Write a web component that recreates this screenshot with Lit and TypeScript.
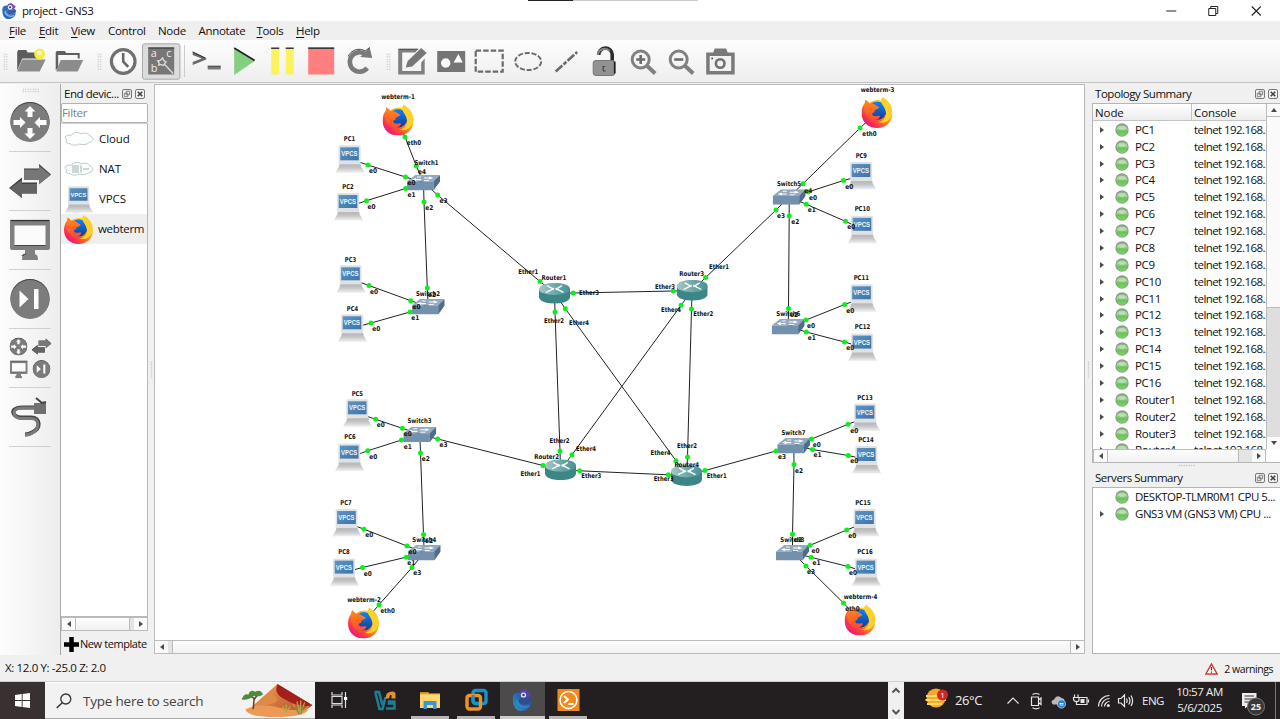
import { LitElement, html, svg, css } from "lit";
import { customElement } from "lit/decorators.js";

type Pt = [number, number];
type Kind = "pc" | "switch" | "router" | "web";
interface Device { name: string; kind: Kind; x: number; y: number; lx: number; ly: number; }
interface End { id: string; dot: Pt; label: string; at: Pt; }

// x / y is the top-left corner of the symbol, lx / ly the middle of the caption.
const d = (name: string, kind: Kind, x: number, y: number, lx: number, ly: number): Device => ({ name, kind, x, y, lx, ly });
const devices: Device[] = [
  d("webterm-1", "web", 382.5, 104.5, 398, 97), d("webterm-2", "web", 348, 607.5, 364, 599.5),
  d("webterm-3", "web", 861.5, 97, 877.5, 89.5), d("webterm-4", "web", 844.5, 604.5, 860.5, 597),
  d("PC1", "pc", 335, 145, 349.5, 139), d("PC2", "pc", 333.5, 192.7, 348, 187),
  d("PC3", "pc", 336, 265, 350.5, 260), d("PC4", "pc", 337.5, 314, 352.5, 308.5),
  d("PC5", "pc", 342.7, 399, 357.3, 393.7), d("PC6", "pc", 334.7, 443.3, 350, 436.8),
  d("PC7", "pc", 332, 508.7, 346, 502.5), d("PC8", "pc", 329.5, 558.3, 344, 552),
  d("PC9", "pc", 846.5, 161.7, 861.3, 156), d("PC10", "pc", 847.5, 215.5, 862.3, 209.3),
  d("PC11", "pc", 847, 284, 861.3, 277.8), d("PC12", "pc", 847.5, 333.3, 862.5, 327.3),
  d("PC13", "pc", 850.5, 403.3, 865, 397.7), d("PC14", "pc", 851.7, 445.7, 866, 439.7),
  d("PC15", "pc", 850, 508.7, 863, 502.5), d("PC16", "pc", 851.3, 558.3, 865, 552),
  d("Switch1", "switch", 407, 175, 426.5, 162.7), d("Switch2", "switch", 411.7, 299, 428, 293.7),
  d("Switch3", "switch", 403.3, 426.7, 419.5, 421), d("Switch4", "switch", 407.7, 545, 424.3, 540),
  d("Switch5", "switch", 772.7, 189.3, 789, 184.3), d("Switch6", "switch", 771.7, 319, 788.3, 314.3),
  d("Switch7", "switch", 777.3, 438, 793.5, 433.2), d("Switch8", "switch", 776, 545, 792.3, 540),
  d("Router1", "router", 539, 282.7, 554, 277.7), d("Router2", "router", 545, 459.3, 546.7, 456.7),
  d("Router3", "router", 676.7, 279.8, 691.7, 273.9), d("Router4", "router", 671, 465, 686.8, 465),
];
const centre: Record<Kind, Pt> = { pc: [15, 14], switch: [16.5, 7.5], router: [15.5, 10.5], web: [15.5, 15.5] };

const e = (id: string, dx: number, dy: number, label: string, lx: number, ly: number): End => ({ id, dot: [dx, dy], label, at: [lx, ly] });
const links: [End, End][] = [
  [e("webterm-1", 405, 137, "eth0", 414, 142.5), e("Switch1", 416.3, 166, "e4", 422, 172)],
  [e("PC1", 368, 165, "e0", 373, 171), e("Switch1", 405.5, 177, "e0", 411.5, 183)],
  [e("PC2", 366.5, 200.7, "e0", 371.5, 206.7), e("Switch1", 405.5, 188.5, "e1", 411.5, 194.5)],
  [e("Switch1", 424, 202, "e2", 429.3, 207.7), e("Switch2", 427.3, 288, "e2", 432, 295)],
  [e("Switch1", 437.7, 195, "e3", 443.5, 201), e("Router1", 540, 281.5, "Ether1", 528.3, 272)],
  [e("PC3", 369, 285.5, "e0", 374, 291.8), e("Switch2", 410.7, 300.7, "e0", 416.5, 306.8)],
  [e("PC4", 371, 323, "e0", 376.3, 328.5), e("Switch2", 410, 312, "e1", 415.3, 318)],
  [e("PC5", 375.7, 419.3, "e0", 380.7, 425), e("Switch3", 402.3, 428.3, "e0", 407.7, 434)],
  [e("PC6", 367.7, 450.8, "e0", 373.2, 456.7), e("Switch3", 401.5, 440, "e1", 407.7, 446.5)],
  [e("Switch3", 420.5, 453, "e2", 425.7, 458.7), e("Switch4", 423.5, 534.5, "e2", 429, 540.5)],
  [e("Switch3", 437.7, 439, "e3", 443.5, 444.5), e("Router2", 543, 465.5, "Ether1", 530.5, 473.5)],
  [e("PC7", 364, 529.2, "e0", 369.3, 535.3), e("Switch4", 407, 546, "e0", 412.5, 552)],
  [e("PC8", 362.5, 567.5, "e0", 367.7, 573.5), e("Switch4", 406.3, 557.2, "e1", 411.3, 563.3)],
  [e("webterm-2", 379, 604.7, "eth0", 387.7, 610.8), e("Switch4", 412, 567.5, "e3", 417.3, 572.8)],
  [e("Router1", 573.3, 293, "Ether3", 589, 292.8), e("Router3", 673.3, 291, "Ether3", 665, 287)],
  [e("Router1", 555, 312, "Ether2", 554, 320.8), e("Router2", 560, 451, "Ether2", 559.5, 440.7)],
  [e("Router1", 565.3, 308.7, "Ether4", 579, 322.7), e("Router4", 676, 460.7, "Ether4", 660.5, 453)],
  [e("Router3", 681, 305.3, "Ether4", 671, 309.7), e("Router2", 572, 454.7, "Ether4", 586, 449)],
  [e("Router3", 691.5, 309, "Ether2", 703.3, 314.3), e("Router4", 687.5, 457, "Ether2", 687, 445.5)],
  [e("Router3", 705.7, 277.5, "Ether1", 719, 266.7), e("Switch5", 776, 210, "e3", 781, 216)],
  [e("Router2", 579.7, 470.8, "Ether3", 591.3, 476.3), e("Router4", 668.3, 474.8, "Ether3", 663.7, 479)],
  [e("Router4", 705, 470.5, "Ether1", 716.7, 476.3), e("Switch7", 776, 451, "e3", 782, 456.7)],
  [e("Switch5", 803, 183.7, "e4", 808.3, 190.7), e("webterm-3", 860, 128, "eth0", 869.5, 133.8)],
  [e("Switch5", 808, 192, "e0", 813, 197.5), e("PC9", 843.5, 180.5, "e0", 849.3, 187)],
  [e("Switch5", 806.3, 204.3, "e1", 811.7, 210.3), e("PC10", 845.5, 221.3, "e0", 851.3, 227.3)],
  [e("Switch5", 789.2, 216, "e2", 795.3, 221.8), e("Switch6", 788.5, 308.5, "e2", 794, 314.8)],
  [e("Switch6", 806, 320, "e0", 811, 326.3), e("PC11", 844.7, 304.5, "e0", 850.3, 310.7)],
  [e("Switch6", 806.3, 332, "e1", 811.7, 337.8), e("PC12", 844.5, 342, "e0", 850.3, 348)],
  [e("Switch7", 811.5, 439, "e0", 816.8, 444.5), e("PC13", 848, 424.3, "e0", 854.2, 430.5)],
  [e("Switch7", 812.5, 449.5, "e1", 817.5, 454.5), e("PC14", 848.3, 455.5, "e0", 854.2, 461.3)],
  [e("Switch7", 794, 464.5, "e2", 799, 470.8), e("Switch8", 792.5, 534.3, "e2", 798, 540.3)],
  [e("Switch8", 810, 545.3, "e0", 815.5, 551), e("PC15", 846.7, 530, "e0", 852.3, 535.5)],
  [e("Switch8", 811, 557.3, "e1", 816.5, 563), e("PC16", 848, 566.5, "e0", 853, 572.8)],
  [e("Switch8", 806, 566, "e3", 811, 571.8), e("webterm-4", 843.5, 603, "eth0", 852.5, 609)],
];
const byName = new Map(devices.map((n) => [n.name, n]));
const mid = (id: string): Pt => {
  const n = byName.get(id)!;
  const c = centre[n.kind];
  return [n.x + c[0], n.y + c[1]];
};
const captionWidth = (t: string): number =>
  t.startsWith("webterm") ? 33.7 : t.startsWith("Router") ? 24.8 : t.startsWith("Switch") ? 24 :
  t.startsWith("Ether") ? 20 : t === "eth0" ? 14.3 : t.startsWith("PC") ? (t.length > 3 ? 15.3 : 11.3) : 8;
const caption = (t: string, x: number, y: number) =>
  svg`<text class="cap" x=${x - captionWidth(t) / 2} y=${y + 2.1} textLength=${captionWidth(t)} lengthAdjust="spacingAndGlyphs">${t}</text>`;

const G = "#808080";
const defs = svg`
  <defs>
    <linearGradient id="base" x2="0" y2="1"><stop offset="0" stop-color="#b4b4b4"/><stop offset=".45" stop-color="#c6c6c6"/><stop offset="1" stop-color="#f4f4f4"/></linearGradient>
    <linearGradient id="screen" x2="1" y2="1"><stop offset="0" stop-color="#5f95c4"/><stop offset="1" stop-color="#3b74a9"/></linearGradient>
    <linearGradient id="rtop" x2="1"><stop offset="0" stop-color="#a9c9c9"/><stop offset=".55" stop-color="#6ba6a6"/><stop offset="1" stop-color="#4a9292"/></linearGradient>
    <linearGradient id="fox" x1=".85" y1=".1" x2=".15" y2=".9"><stop offset="0" stop-color="#fff44f"/><stop offset=".3" stop-color="#ffbb1c"/><stop offset=".55" stop-color="#ff7a1a"/><stop offset=".8" stop-color="#ff3647"/><stop offset="1" stop-color="#e31587"/></linearGradient>
    <linearGradient id="foxl" x2="0" y2="1"><stop offset="0" stop-color="#ff8a1e"/><stop offset=".5" stop-color="#ff6a22"/><stop offset="1" stop-color="#ff4a3a"/></linearGradient>
    <linearGradient id="foxb" x2="0" y2="1"><stop offset="0" stop-color="#0a84ff"/><stop offset="1" stop-color="#15398f"/></linearGradient>
    <linearGradient id="dune" x2="1" y2="1"><stop offset="0" stop-color="#e7a05a"/><stop offset="1" stop-color="#b9481f"/></linearGradient>
    <linearGradient id="led" x2="0" y2="1"><stop offset="0" stop-color="#7fae75"/><stop offset=".35" stop-color="#a6d79c"/><stop offset=".6" stop-color="#6cc05c"/><stop offset="1" stop-color="#74dc5c"/></linearGradient>
    <linearGradient id="cham" x1="1" x2="0" y2="1"><stop offset="0" stop-color="#7a2fa5"/><stop offset=".5" stop-color="#2c62b5"/><stop offset="1" stop-color="#26a3b8"/></linearGradient>
    <symbol id="pc" viewBox="0 0 30 28">
      <path d="M5.500 19H24.500L30 28H0Z" fill="url(#base)"/>
      <path d="M5 18.500H25L26.500 21H3.500Z" fill="#b9bcbf"/>
      <rect x="3.600" y=".3" width="22" height="19" rx="1.500" fill="#dfe1e3"/>
      <rect x="5.200" y="2.300" width="18.600" height="13" fill="url(#screen)"/>
      <text x="6.300" y="11.400" class="vp" textLength="16.200" lengthAdjust="spacingAndGlyphs">VPCS</text>
    </symbol>
    <symbol id="switch" viewBox="0 0 33 15.500">
      <path d="M0 6.600L8.300 0H33L27 6.600Z" fill="#93a9c0"/>
      <path d="M0 6.600H26.500V15.500H1Q0 15.500 0 14.500Z" fill="#7390ad"/>
      <path d="M26.500 6.600L33 0V6.500L26.500 15.500Z" fill="#4f6c8c"/>
      <path d="M17 2.500H22V1.500L26.500 3L22 4.500V3.500H17ZM14 5.300H9V6.300L5 4.600L9 3.100V4.100H14Z" fill="#fff"/>
      <path d="M10 2H14M17 5.500H22" stroke="#fff" stroke-width=".9"/>
    </symbol>
    <symbol id="router" viewBox="0 0 31 21">
      <path d="M0 6V14.500C1 23 30 23 31 14.500V6Z" fill="#3b8686"/>
      <ellipse cx="15.500" cy="6.200" rx="15.500" ry="6.200" fill="url(#rtop)"/>
      <path d="M8 3L14 6.200L7 9.600M23 3L17.500 6.200L24.500 9.600" fill="none" stroke="#f4fafa" stroke-width="1.500"/>
      <path d="M11 6.500L15 4.800L14.500 7.500ZM20.500 6.500L16.500 4.800L17 7.500Z" fill="#f4fafa"/>
    </symbol>
    <symbol id="web" viewBox="0 0 31 31">
      <path d="M4 2.500L8 6C11 3.500 16 2.500 19 3.500L21 .3C28 4 31 10 31 16C31 25 24 31 15.500 31S0 25 0 16C0 12 1.500 8 3.500 6Z" fill="url(#fox)"/>
      <circle cx="15.800" cy="13.800" r="9.200" fill="url(#foxb)"/>
      <path d="M4 3L8.500 7C11 6.500 13 6.800 14 8L18 10.300C17 12 14.500 12.300 13 13.500L13 15.500C11 15 10.300 16.500 11 18C13 20.300 16 18 18.500 19C18 22.300 14 24.300 9.500 22.800C5 20 2 15 2.800 8Z" fill="url(#foxl)"/>
      <path d="M21 .3C29 5 31 11 30.700 17C28 25 22 27 17 25C23 24 26 19 24 14C23.500 10 20 8 20 4.500C20 3 20.500 1.500 21 .3Z" fill="#ffd02a"/>
    </symbol>
    <symbol id="float" viewBox="0 0 10 10"><rect x=".5" y=".5" width="9" height="9" rx="1.500" fill="#f3f3f3" stroke="#777"/><path d="M4.200 2.300H7.700V5.800H4.200ZM2.300 4.200H5.800V7.700H2.300Z" fill="#f3f3f3" stroke="#666" stroke-width=".8"/></symbol>
    <symbol id="shut" viewBox="0 0 10 10"><rect x=".5" y=".5" width="9" height="9" rx="1.500" fill="#f3f3f3" stroke="#777"/><path d="M2.700 2.700L7.300 7.300M7.300 2.700L2.700 7.300" stroke="#444" stroke-width="1.600"/></symbol>
    <symbol id="arrows4" viewBox="-20 -20 40 40">
      <circle r="19.600" cy="-.3" fill="#3c3c3c"/><circle r="19.400" cy=".5" fill="#7c7c7c"/>
      <path d="M0-16L5.500-10.500H2.500V-5H-2.500V-10.500H-5.500Z" fill="#fff"/>
      <path d="M0 17L5.500 11.500H2.500V6H-2.500V11.500H-5.500Z" fill="#fff"/>
      <path d="M-4.500 .5L-10-5V-2H-16.500V3H-10V6Z" fill="#fff"/>
      <path d="M4.500 .5L10-5V-2H16.500V3H10V6Z" fill="#fff"/>
    </symbol>
    <symbol id="swap" viewBox="-21 -17 42 34">
      <path d="M-6-12.500H9V-17L21-6.500L9 3V-1H-6Z" fill="#3f3f3f"/><path d="M-6-11.500H9V-15.500L20.500-5.800L9 3.500V-1H-6Z" fill="#777"/>
      <path d="M7 1.500H-8V-3.500L-21 7L-8 17V12.500H7Z" fill="#404040"/><path d="M7 3H-8V-1.500L-20 7.500L-8 17V12.500H7Z" fill="#646464"/>
    </symbol>
    <symbol id="screenic" viewBox="-20.500 -20.500 41 41">
      <path d="M-18.500-20H18.500Q20-20 20-18V8Q20 10 18 10H5V14Q8 14.500 8 20H-8Q-8 14.500-5 14V10H-18Q-20 10-20 8V-18Q-20-20-18.500-20Z" fill="${G}"/>
      <path d="M-19.500-19.500H19.500" stroke="#333" stroke-width="1.500"/><rect x="-15.500" y="-14.500" width="31" height="20" fill="#fbfbfb"/><path d="M-15.500 5.500H15.500M-8 16Q-6 14-4 14" stroke="#444" stroke-width="1.200" fill="none"/>
    </symbol>
    <symbol id="step" viewBox="-20 -20 40 40">
      <circle r="19.600" cy="-.3" fill="#3c3c3c"/><circle r="19.400" cy=".5" fill="#7c7c7c"/>
      <path d="M-10.500-8.500L-1.500 0L-10.500 8.500ZM4-10H8.500V10H4Z" fill="#fff"/>
    </symbol>
  </defs>`;

const use = (id: string, w: number, h: number, x = 0, y = 0) =>
  svg`<use href="#${id}" x=${x} y=${y} width=${w} height=${h}></use>`;
const icon = (cls: string, box: string, body: unknown) => html`<svg class=${cls} viewBox=${box}>${body}</svg>`;

const fileTools = [
  svg`<path d="M-14-9.500L-13-11.500H-5L-3.500-9H8V-3H-9L-14 9Z" fill="#5c5c5c"/><path d="M-9-2H14.500L8.500 10H-14Z" fill="#8c8c8c"/><circle cx="8.500" cy="-7.500" r="5.500" fill="#f5ec4a"/><circle cx="8" cy="-8.500" r="2.500" fill="#fdf9b0"/>`,
  svg`<path d="M-13.500-9L-12.500-10.500H-4.500L-3-8.500H10.500V-3H8.500V-6.500H-11V6L-13.500 9Z" fill="#5f5f5f"/><path d="M-8.500-1.500H14L8.500 10H-13Z" fill="#8c8c8c"/>`,
];
const viewTools = [
  svg`<circle r="11.800" fill="#fbfbfb" stroke="#707070" stroke-width="3.200"/><path d="M0-8.500V0L5 5.500" fill="none" stroke="#666" stroke-width="2.600"/>`,
  svg`<rect x="-18.700" y="-17.700" width="37.400" height="35.400" rx="2" fill="#dcdcdc" stroke="#aaa"/><rect x="-13" y="-14" width="26" height="27" fill="#777"/><path d="M-13-13.500H13" stroke="#333"/>
    <text class="abc" x="-10.500" y="-4.500">a</text><text class="abc" x="5" y="-4.500">c</text><text class="abc" x="-10.500" y="10.500">b</text>
    <path d="M-3.500-.5L-1-1L1.500-3.500L2.500-1L5 .5L3.500 2L2 4L-.5 3L-2.500 3.500L-2 1.500ZM3 2.500L12 12" fill="none" stroke="#dcdcdc" stroke-width="1.300"/>`,
];
const runTools = [
  svg`<path d="M-13.500-10L0-3.500V-2L-13.500 3.500V.5L-4.500-3L-13.500-6.500Z" fill="#6a6a6a"/><path d="M-13.500-9.500L-1-3.500" stroke="#333" fill="none"/><rect x="1.500" y="4.500" width="13" height="3.500" fill="#777"/><path d="M1.500 4.700H14.500" stroke="#444"/>`,
  svg`<path d="M-10-14L10.500-.5L-10 13.500Z" fill="#85cf80"/><path d="M-10-13.500L10.500-1" stroke="#222" stroke-width="1.600"/>`,
  svg`<path d="M-11-14H-3V13H-11ZM3.500-14H11.500V13H3.500Z" fill="#fbf35b"/><path d="M-11-13.300H-3M3.500-13.300H11.500" stroke="#3a3a3a" stroke-width="1.600"/>`,
  svg`<rect x="-13" y="-14" width="26" height="27" fill="#ff7f7f"/><path d="M-13-13.300H13" stroke="#3a3a3a" stroke-width="1.600"/>`,
  svg`<path d="M8 6.500A9.700 9.700 0 1 1 6.500-7" fill="none" stroke="#7a7a7a" stroke-width="4.600"/><path d="M10.500-14L13-3.500L1-4.500Z" fill="#7a7a7a"/><path d="M-11-5A11.800 11.800 0 0 1 6-10.500L10.500-14" fill="none" stroke="#444"/>`,
];
const drawTools = [
  svg`<path d="M-14-12.500H6L3-9H-10V9.500H9V1L12.500-3V13H-14Z" fill="${G}"/><path d="M-13.500-12.300H6" stroke="#444"/><path d="M-6.500 6L-4.500-.5L9-13.500L14.500-8.500L0 5Z" fill="#777"/>`,
  svg`<rect x="-14" y="-10.500" width="28" height="21" fill="#757575"/><circle cx="-5.500" cy="1.500" r="4.700" fill="#fff"/><path d="M2.500 1L7.200-7.500L11.500 1Z" fill="#fff"/>`,
  svg`<rect x="-13.500" y="-10.800" width="27" height="21" fill="none" stroke="#6b6b6b" stroke-width="2.200" stroke-dasharray="5.500 2"/>`,
  svg`<ellipse rx="13" ry="8.600" fill="none" stroke="#6b6b6b" stroke-width="2" stroke-dasharray="5 1.800"/>`,
  svg`<path d="M-10.500 10L11-9.500" stroke="#6b6b6b" stroke-width="2.600" stroke-dasharray="9 1.500 4 1.500"/>`,
  svg`<path d="M-5.500-6.500A6.200 6.200 0 0 1 8-7V0" fill="none" stroke="#2d2d2d" stroke-width="3.600"/><path d="M-6.500-6.500A7 7 0 0 1 5.500-10.500" fill="none" stroke="#888" stroke-width="2"/><rect x="-11" y="-1" width="21.500" height="15" rx="2.500" fill="#929292" stroke="#767676"/><path d="M10.500 0V12" stroke="#222" stroke-width="1.800"/><path d="M-1 4.500V9.500M-1 5H1M-1 9.500H1.500" stroke="#444" stroke-width="1.200"/>`,
  svg`<circle cx="-2.500" cy="-2" r="8.500" fill="#f4f4f4" stroke="${G}" stroke-width="3"/><path d="M4 4.500L12 12" stroke="${G}" stroke-width="4"/><path d="M-7-2H2M-2.500-6.500V2.500" stroke="#6b6b6b" stroke-width="2.600"/>`,
  svg`<circle cx="-2.500" cy="-2" r="8.500" fill="#f4f4f4" stroke="${G}" stroke-width="3"/><path d="M4 4.500L12 12" stroke="${G}" stroke-width="4"/><path d="M-7-2H2" stroke="#6b6b6b" stroke-width="2.600"/>`,
  svg`<path d="M-14-9H-7L-5.500-13H6L7.500-9H14.500V13H-14Z" fill="#7a7a7a"/><rect x="-10.500" y="-5.500" width="21.500" height="15" fill="#f2f2f2"/><circle cy="2" r="4.300" fill="none" stroke="#707070" stroke-width="2.600"/><circle cx="-8" cy="-3" r="1" fill="#555"/>`,
];
const sideTools = [
  use("arrows4", 40, 41, -20, -20.5),
  use("swap", 42, 34, -21, -17),
  use("screenic", 41, 41, -20.5, -20.5),
  use("step", 40, 41, -20, -20.5),
  [use("arrows4", 18, 18, -20.5, -20.5), use("swap", 20, 17, 1.5, -20), use("screenic", 18.5, 18, -20.5, 2.5), use("step", 18, 18, 2.5, 2)],
  svg`<path d="M4-11H-8C-21-11-18-1-9-1H1C11-1 11 10 2 14Q-1 16-5 16" fill="none" stroke="#444" stroke-width="4" transform="translate(0 1.500)"/><path d="M4-10H-8C-20-10-17 .5-9 .5H1C10 .5 10 11 2 15Q-1 17-5 17" fill="none" stroke="#7b7b7b" stroke-width="3" transform="translate(0 1)"/><path d="M4-14H16V-3H4Z" fill="#707070"/><path d="M6-19L12-14L16-15" stroke="#444" stroke-width="2" fill="none"/>`,
];
const cloud = svg`<path d="M3 8C-1 5 3 2 7 3.500C9 0 15-.5 17 2C20 .5 25 1 26 4C30 5 30 10 25 10.500C22 13.500 17 12.500 15 12C12 14 7 13 6 11.500C2 12 1 9.500 3 8Z" fill="#fdfefe" stroke="#a9bdbb" stroke-width=".8"/>`;
const palette = [
  { name: "Cloud", w: 30, h: 14, art: cloud },
  { name: "NAT", w: 30, h: 14, art: [cloud, svg`<path d="M8 4h7M8 6h7M8 8h7M8 10h7M17 3.500v7M19 7h6" stroke="#8fa9a6" stroke-width=".9"/>`] },
  { name: "VPCS", w: 30, h: 27, art: use("pc", 30, 27) },
  { name: "webterm", w: 29, h: 29, art: use("web", 29, 29) },
];
const menus = ["File", "Edit", "View", "Control", "Node", "Annotate", "Tools", "Help"];
const plain = new Set(["Control", "Node", "Annotate"]);
const menuX = [9, 39, 71, 108, 158, 198.5, 256.5, 296, 330];
const nodeRows = [...Array.from({ length: 16 }, (_, i) => `PC${i + 1}`), "Router1", "Router2", "Router3", "Router4"];
const led = icon("led", "0 0 14 14", svg`<circle cx="7" cy="7" r="6.700" fill="#8f9a8d"/><circle cx="7" cy="7.200" r="5.600" fill="url(#led)"/><ellipse cx="7" cy="4.700" rx="3.600" ry="2" fill="#c4e6bd" opacity=".7"/>`);
const tri = (pts: string) => icon("tri", "0 0 8 8", svg`<path d=${pts} fill="#4a4a4a"/>`);
const LEFT = "M6 1V7L2 4Z", RIGHT = "M2 1V7L6 4Z", UP = "M1 6H7L4 2Z", DOWN = "M1 2H7L4 6Z";

@customElement("app-root")
export class AppRoot extends LitElement {
  static styles = css`
    :host { display: flex; flex-direction: column; width: 1280px; height: 719px; overflow: hidden; background: #f0f0f0; font: 11.500px/16px "Open Sans", "Noto Sans", sans-serif; letter-spacing: -0.32px; color: #111; }
    * { box-sizing: border-box; }
    svg { display: block; flex: none; }
    .title { height: 21px; background: #fff; display: flex; align-items: center; padding: 0 3px 0 2px; position: relative; flex: none; letter-spacing: -.42px; }
    .title .name { flex: 1; padding-left: 6px; }
    .notch { position: absolute; left: 528px; top: 0; width: 170px; height: 1px; background: linear-gradient(90deg, #222 45px, #ccc 45px); }
    .logo { width: 14px; height: 16px; }
    .win { width: 42.500px; height: 20px; }
    .menu { height: 19px; display: grid; padding-left: 9px; align-items: center; background: #efefef; flex: none; }
    .menu u { text-underline-offset: 2px; text-decoration-thickness: 1px; }
    .tools { height: 43px; display: flex; align-items: center; flex: none; background: linear-gradient(#fdfdfd, #eee); border-bottom: 1px solid #c3c3c3; }
    .tb { width: 38.400px; height: 38px; overflow: visible; }
    .grip { width: 5px; height: 17px; background-image: radial-gradient(circle, #c2c2c2 .6px, transparent .9px); background-size: 2.500px 2.500px; flex: none; }
    .g1 { margin: 0 3.400px 0 3.400px; } .g2 { margin: 0 2px 0 8px; } .g3 { margin: 0 2.300px 0 7.500px; }
    .vsep { width: 1px; height: 32px; background: #ccc; margin: 0 2px 0 3.300px; }
    .work { flex: 1; min-height: 0; display: flex; padding-top: 1px; }
    .side { width: 61px; flex: none; border-right: 1px solid #a9a9a9; background: linear-gradient(90deg, #fdfdfd, #ededed); display: flex; flex-direction: column; align-items: center; }
    .hgrip { width: 17px; height: 5px; margin: 4px 0 0; background-image: radial-gradient(circle, #bbb .6px, transparent .9px); background-size: 2.500px 2.500px; flex: none; }
    .sb { width: 60px; height: 59px; border-bottom: 1px solid transparent; border-image: linear-gradient(90deg, transparent 16%, #d0d0d0 16%, #d0d0d0 84%, transparent 84%) 1; }
    .dock { width: 87px; flex: none; display: flex; flex-direction: column; }
    .dt { height: 19px; display: flex; align-items: center; padding: 0 3px 0 3px; gap: 3px; flex: none; letter-spacing: -.45px; }
    .dt span { flex: 1; white-space: nowrap; }
    .db { width: 10px; height: 10px; }
    .filter { height: 20px; border: 1px solid #b2b2b2; border-radius: 2px; background: #fff; color: #808080; line-height: 18px; flex: none; }
    .list { flex: 1; background: #fff; border: 1px solid #b8b8b8; border-left: 0; border-top-color: #d0d0d0; }
    .item { height: 30px; display: flex; align-items: center; gap: 5px; padding-left: 3px; letter-spacing: -.1px; }
    .item.sel { background: #efefef; letter-spacing: -.3px; }
    .hs { height: 14px; display: flex; border: 1px solid #bbb; background: #e4e4e4; flex: none; }
    .ab { width: 13px; background: #fafafa; display: flex; align-items: center; justify-content: center; flex: none; }
    .tri { width: 8px; height: 8px; }
    .thumb { background: linear-gradient(#fdfdfd, #f1f1f1); border: 0 solid #bbb; border-width: 0 1px; }
    .canvas .thumb { margin-left: 4px; }
    .canvas .hs { border-left: 0; border-right: 0; }
    .new { height: 23px; display: flex; align-items: center; padding-left: 3px; gap: 1px; white-space: nowrap; font-size: 11px; flex: none; margin-bottom: 1px; padding-top: 3px; letter-spacing: -.42px; }
    .plus { width: 15px; height: 15px; }
    .split { width: 6px; display: flex; align-items: center; justify-content: center; flex: none; }
    .split.wide { width: 7px; }
    .split .grip { width: 3px; }
    .canvas { width: 931px; display: flex; flex-direction: column; border: 1px solid #bbb; border-width: 1px 1px 0 1px; background: #fff; flex: none; margin-bottom: 1px; }
    .topo { flex: 1; min-height: 0; width: 929px; }
    .cap { font: bold 6.600px "DejaVu Sans", sans-serif; fill: #111; letter-spacing: 0; }
    .vp { font: bold 6.500px "Liberation Sans", sans-serif; fill: #eef5fb; letter-spacing: 0; }
    .abc { font: 11px "Open Sans", sans-serif; fill: #ececec; letter-spacing: 0; }
    .right { width: 188px; display: flex; flex-direction: column; flex: none; }
    .right .dt { padding-right: 2px; gap: 3px; }
    .table { height: 360px; display: grid; grid-template-columns: 173px 14px; grid-template-rows: 345px 14px; border: 1px solid #b5b5b5; border-right: 0; background: #fff; flex: none; overflow: hidden; }
    .rows { overflow: hidden; }
    .head { height: 17.400px; display: grid; grid-template-columns: 98px 1fr; line-height: 17px; background: linear-gradient(#fff, #ececec); border-bottom: 1px solid #c4c4c4; letter-spacing: -.1px; }
    .head span { padding-left: 2px; } .head span + span { border-left: 1px solid #c4c4c4; }
    .row { height: 16.880px; display: grid; grid-template-columns: 22px 20px 59px 80px; align-items: center; white-space: nowrap; line-height: 16px; overflow: hidden; }
    .row span + span { letter-spacing: -.57px; }
    .row .tri { margin-left: 5px; }
    .led { width: 14px; height: 14px; }
    .vs { display: flex; flex-direction: column; border-left: 1px solid #bbb; background: #dedede; }
    .vs .ab { width: 13px; height: 12px; }
    .vs .thumb { height: 192px; border-width: 1px 0; background: #fafafa; }
    .fill { flex: 1; }
    .mid { height: 5px; display: flex; justify-content: center; flex: none; }
    .mid .hgrip { margin: 1px 0 0; height: 3px; }
    .servers { flex: 1; background: #fff; border: 1px solid #b5b5b5; border-right: 0; padding-top: 1px; margin-bottom: 1px; }
    .servers .row { grid-template-columns: 22px 20px 144px; letter-spacing: -.47px; }
    .status { height: 27px; display: flex; align-items: center; justify-content: space-between; padding: 0 7px 0 5px; border-bottom: 1px solid #cfcfcf; flex: none; letter-spacing: -.36px; }
    .warn { display: flex; align-items: center; gap: 6px; font-size: 10.500px; letter-spacing: -.45px; padding-top: 2px; }
    .wi { width: 13px; height: 12px; }
    .task { height: 37px; display: flex; background: #231f20; color: #eee; flex: none; letter-spacing: -.2px; }
    .start { width: 45px; background: #393031; display: flex; align-items: center; justify-content: center; }
    .search { width: 270px; background: #f2f2f2; color: #444; display: flex; align-items: center; padding-left: 11px; font-size: 13.500px; border-top: 1px solid #fff; border-bottom: 1px solid #aaa; }
    .search span { flex: 1; padding-left: 11px; }
    .app { width: 38px; border-bottom: 3px solid transparent; display: flex; align-items: center; justify-content: center; margin: 0 4px; padding-top: 2px; }
    .app.open { border-color: #b9b5b5; }
    .app.cur { width: 45px; margin: 0 .5px; background: #4d4a4b; border-color: #cfcccc; }
    .i26 { width: 26px; height: 26px; }
    .spin { width: 16px; background: #f0f0f0; }
    .temp { font-size: 13px; width: 54px; padding-left: 7px; line-height: 37px; letter-spacing: -.4px; }
    .tray { width: 137px; height: 37px; }
    .lang { line-height: 37px; width: 29px; padding-left: 3px; letter-spacing: -.5px; }
    .clock { width: 67px; text-align: center; line-height: 16.500px; padding: 1.500px 4px 0 0; letter-spacing: -.4px; }
    .note { width: 40px; height: 37px; }
    .n25 { font: bold 9px "Open Sans", sans-serif; fill: #eee; letter-spacing: 0; }
    .n1 { font: 8px "Open Sans", sans-serif; fill: #fff; letter-spacing: 0; }
  `;

  private topology() {
    return html`<svg class="topo" viewBox="155 85 929 555">
      ${defs}
      <g stroke="#222" stroke-width="1">
        ${links.map(([a, b]) => {
          const p = mid(a.id), q = mid(b.id);
          return svg`<path d="M${p[0]} ${p[1]}L${a.dot[0]} ${a.dot[1]}L${b.dot[0]} ${b.dot[1]}L${q[0]} ${q[1]}" fill="none"/>`;
        })}
      </g>
      ${devices.map((n) => n.kind === "pc" ? use("pc", 30, 28, n.x, n.y) : n.kind === "switch" ? use("switch", 33, 15.5, n.x, n.y)
        : n.kind === "router" ? use("router", 31, 21, n.x, n.y) : use("web", 31, 31, n.x, n.y))}
      ${links.flat().map((p) => svg`<circle cx=${p.dot[0]} cy=${p.dot[1]} r="2.500" fill="#0cf01a"/>`)}
      ${links.flat().map((p) => caption(p.label, p.at[0], p.at[1]))}
      ${devices.map((n) => caption(n.name, n.lx, n.ly))}
    </svg>`;
  }

  private dockTitle(t: string) {
    return html`<div class="dt"><span>${t}</span>${icon("db", "0 0 10 10", use("float", 10, 10))}${icon("db", "0 0 10 10", use("shut", 10, 10))}</div>`;
  }

  private desert() {
    return svg`
      <path d="M12 24L38 1L74 23L60 33H20Z" fill="url(#dune)"/>
      <path d="M38 1L74 23Q60 26 44 16Q34 11 38 1Z" fill="#a3201d"/>
      <path d="M38 1Q28 14 12 24L30 22Q44 18 33 12Z" fill="#e08a45"/>
      <path d="M5 27Q20 20 38 25T70 27Q66 35 36 35T5 27Z" fill="#eb9a55"/>
      <path d="M13 27L14 16L9 12M14 17L18 11" stroke="#6b4423" stroke-width="1.600" fill="none"/>
      <path d="M1 17Q4 10 8 12Q10 6 15 9Q21 6 23 12Q18 15 14 13Q8 18 1 17Z" fill="#4f8a3c"/>
      <path d="M61 32L54 22M61 32L58 19M61 32L62 18M61 32L66 20M61 32L70 24M47 30L43 24M47 30L47 22M47 30L51 24" stroke="#b9a34a" stroke-width="1.400"/>
      <path d="M60 32L56 24M62 32L64 23" stroke="#6f8f3a" stroke-width="1.200"/>`;
  }

  private taskbar() {
    return html`<div class="task">
      <div class="start"><svg width="15" height="15" viewBox="0 0 15 15"><path d="M0 2L6.700 1V7H0ZM7.600 .9L15 0V7H7.600ZM0 8H6.700V14L0 13ZM7.600 8H15V15L7.600 14Z" fill="#fff"/></svg></div>
      <div class="search"><svg width="16" height="16" viewBox="0 0 16 16"><circle cx="9.800" cy="6" r="5" fill="none" stroke="#333" stroke-width="1.300"/><path d="M6.300 9.700L.7 15" stroke="#333" stroke-width="1.500"/></svg><span>Type here to search</span><svg width="75" height="35" viewBox="0 0 76 36">${this.desert()}</svg></div>
      <div class="app">${icon("i26", "-15 -13 26 26", svg`<path d="M-8-8V-5H2V-8M-8 8V5H2V8M-8-3.500H2V3.500H-8ZM5.500-8V8" fill="none" stroke="#ddd" stroke-width="1.200"/><rect x="4" y="-3" width="3.200" height="3" fill="#fff"/>`)}</div>
      <div class="app">${icon("i26", "-13.500 -13 26 26", svg`<path d="M-10-8H-5.500L-2 5M-9-7L-5 9H-2L1-3M11 1.500H4.500V3.500H10V8.500H1.500" fill="none" stroke="#1b7f95" stroke-width="2.500"/><path d="M1-1.500Q1-8.500 8-8.500Q11-8.500 11-6V-1.500H7V-5H5.500L4.500-1.500Z" fill="#e5912d"/>`)}</div>
      <div class="app open">${icon("i26", "-13 -13 26 26", svg`<path d="M-10-8H-2L-1-6.500H10V8H-10Z" fill="#f3c14b"/><path d="M-10-8H-2L-1-6.500H-10Z" fill="#c98a1c"/><path d="M-10-5H10V8H-10Z" fill="#ffd873"/><path d="M-6.500 1H6.500V9H3V5H-3V9H-6.500Z" fill="#3f95cf"/>`)}</div>
      <div class="app open">${icon("i26", "-13.500 -13 26 26", svg`<rect x="-3.500" y="-9.500" width="13" height="13" rx="2.500" fill="none" stroke="#1594cf" stroke-width="3.400"/><rect x="-9.500" y="-4.500" width="13.500" height="13.500" rx="2.500" fill="none" stroke="#f0921e" stroke-width="3.400"/><path d="M-3.500-5V0Q-3.500 3.500 0 3.500H2" fill="none" stroke="#1594cf" stroke-width="3"/>`)}</div>
      <div class="app open cur">${icon("i26", "-13 -13 26 26", svg`<path d="M-9 0C-10-7-5-8-2-7C-2-11 5-11 6-8L9-6L7-3.500C3-1-3-4-3 1C-3 5 4 6 9 2C9 8 4 11-1 11C-6 11-9 6-9 0Z" fill="url(#cham)"/><path d="M-3 1C-3-3 3-1 7-3C10-1 10 1 9 2C4 6-3 5-3 1Z" fill="#2b4f92"/><path d="M-5 0C-6 5 1 9 7 6" fill="none" stroke="#2f8fd0" stroke-width="1.200"/><circle cx="1.500" cy="-5" r="2.600" fill="#e6e2f3"/><circle cx="1.500" cy="-5" r="1.200" fill="#3a2b78"/>`)}</div>
      <div class="app open">${icon("i26", "-13.500 -13 26 26", svg`<rect x="-11" y="-11" width="22" height="22" fill="#f08a1d"/><circle r="8.500" fill="none" stroke="#fff" stroke-width="1.500"/><path d="M-4.500-4L-.5-.5L-4.500 3M0 4H5" fill="none" stroke="#fff" stroke-width="2"/>`)}</div>
      <div class="fill"></div>
      <div class="spin"><svg width="16" height="37" viewBox="0 0 16 37"><path d="M4.500 10.500L8 7L11.500 10.500M4.500 28L8 31.500L11.500 28" fill="none" stroke="#555" stroke-width="2"/></svg></div>
      <svg width="44" height="37" viewBox="904 682 44 37"><circle cx="936" cy="698" r="9.500" fill="#f8a827"/><path d="M926 696H944M925.500 700H946M927 704H942" stroke="#ffd86b" stroke-width="2"/><circle cx="942.500" cy="695" r="5.500" fill="#c92a21"/><text x="940.300" y="698" class="n1">1</text></svg>
      <div class="temp">26°C</div>
      <svg class="tray" viewBox="1002 682 137 37" fill="none" stroke="#e6e6e6" stroke-width="1.200">
        <path d="M1007.500 703.500L1013 698L1018.500 703.500"/>
        <path d="M1031.500 697H1038.500V705.500H1031.500ZM1038.500 700L1041 698V704.500L1038.500 702.500M1032.500 694.500Q1036 692.500 1039.500 694.500M1032.500 707.800Q1036 709.800 1039.500 707.800"/>
        <path d="M1053 704.500Q1049.500 701 1054 699.500Q1057 694 1061.500 698Q1065 698.500 1064.500 702V704.500Z" fill="#b9b9b9" stroke="none"/><circle cx="1061.500" cy="704" r="4.200" fill="#2d82cc" stroke="#cfe4f5" stroke-width=".6"/><path d="M1059.500 703.500H1063.500M1059.500 705H1063.500" stroke="#fff" stroke-width=".8"/>
        <path d="M1079 697.500H1087V704.500H1079M1088.500 699.500V702.500M1074.500 694.500V697M1078 694.500V697M1073.500 697.500H1079V700Q1079 701.500 1076.500 701.500Q1073.500 701.500 1073.500 699ZM1076.500 701.500V704.500H1080"/><rect x="1080.500" y="699" width="4" height="4" fill="#e6e6e6" stroke="none"/>
        <path d="M1098.500 706.500A11 11 0 0 1 1109.500 695.500M1101.500 706.500A8 8 0 0 1 1109.500 698.500M1104.500 706.500A5 5 0 0 1 1109.500 701.500"/><circle cx="1108.300" cy="705.500" r="1.500" fill="#e6e6e6" stroke="none"/>
        <path d="M1118.500 698.500H1121L1124.500 695V706.500L1121 703H1118.500ZM1126.500 698.500Q1128 700.800 1126.500 703M1128.700 697Q1131.200 700.800 1128.700 704.500M1131 695.500Q1134.200 700.800 1131 706"/>
      </svg>
      <div class="lang">ENG</div>
      <div class="clock">10:57 AM<br>5/6/2025</div>
      <svg class="note" viewBox="1235 682 40 37"><path d="M1242 693H1256.500V706H1248L1245 708.500V706H1242Z" fill="#eee"/><path d="M1244.500 696H1254M1244.500 699H1254M1244.500 702H1250" stroke="#333"/><circle cx="1256" cy="706.500" r="8.500" fill="#3b3738" stroke="#777" stroke-width="1"/><text class="n25" x="1250.800" y="710">25</text></svg>
      <svg width="5" height="37"><path d="M.5 0V37" stroke="#777"/></svg>
    </div>`;
  }

  render() {
    const cols = menuX.slice(1).map((x, i) => `${x - menuX[i]}px`).join(" ");
    const row = (name: string, con: string, open = true) => html`<div class="row">${open ? tri(RIGHT) : html`<i></i>`}${led}<span>${name}</span>${con ? html`<span>${con}</span>` : ""}</div>`;
    return html`
      <div class="title"><i class="notch"></i>
        ${icon("logo", "-9.500 -10.500 19 21", svg`<path d="M-9 0C-10-7-5-8-2-7C-2-11 5-11 6-8L9-6L7-3.500C3-1-3-4-3 1C-3 5 4 6 9 2C9 8 4 11-1 11C-6 11-9 6-9 0Z" fill="#2a6fb8"/><path d="M-3 1C-3-3 3-1 7-3C10-1 10 1 9 2C4 6-3 5-3 1Z" fill="#3d5ba8"/><path d="M-2-7C-2-11 5-11 6-8L9-6L7-3.500L4-2.500Z" fill="#7b4bb0"/><path d="M-5 0C-6 5 1 9 7 6" fill="none" stroke="#8cc8e6" stroke-width="1.500"/><circle cx="1.500" cy="-5" r="3" fill="#f2eefa"/><circle cx="1.500" cy="-5" r="1.400" fill="#333"/>`)}
        <span class="name">project - GNS3</span>
        ${icon("win", "-21.250 -10 42.500 20", svg`<path d="M-5 0H5" stroke="#222"/>`)}
        ${icon("win", "-21.250 -10 42.500 20", svg`<path d="M-4.500-2.500H2.500V4.500H-4.500ZM-2.500-2.500V-4.500H4.500V2.500H2.500" fill="none" stroke="#222"/>`)}
        ${icon("win", "-21.250 -10 42.500 20", svg`<path d="M-4.500-4.500L4.500 4.500M4.500-4.500L-4.500 4.500" stroke="#222" stroke-width="1.100"/>`)}
      </div>
      <div class="menu" style="grid-template-columns:${cols}">${menus.map((m) => plain.has(m) ? html`<span>${m}</span>` : html`<span><u>${m[0]}</u>${m.slice(1)}</span>`)}</div>
      <div class="tools">
        <i class="grip g1"></i>${fileTools.map((t) => icon("tb", "-19.200 -19.500 38.400 38", t))}
        <i class="grip g2"></i>${viewTools.map((t) => icon("tb", "-19.200 -19.500 38.400 38", t))}
        <i class="vsep"></i>${runTools.map((t) => icon("tb", "-19.200 -19.500 38.400 38", t))}
        <i class="grip g3"></i>${drawTools.map((t) => icon("tb", "-19.200 -19.500 38.400 38", t))}
      </div>
      <div class="work">
        <div class="side"><i class="hgrip"></i>${sideTools.map((t) => icon("sb", "-30 -29 60 58", t))}</div>
        <div class="dock">
          ${this.dockTitle("End devic...")}
          <div class="filter">Filter</div>
          <div class="list">${palette.map((p, i) => html`<div class="item ${i === 3 ? "sel" : ""}"><svg width=${p.w} height=${p.h} viewBox="0 0 ${p.w} ${p.h}">${p.art}</svg>${p.name}</div>`)}</div>
          <div class="hs"><div class="ab">${tri(LEFT)}</div><div class="thumb" style="width:55px"></div><div class="fill"></div><div class="ab">${tri(RIGHT)}</div></div>
          <div class="new">${icon("plus", "0 0 15 15", svg`<path d="M7.500 0V15M0 7.500H15" stroke="#000" stroke-width="4.500"/>`)}New template</div>
        </div>
        <div class="split"><i class="grip"></i></div>
        <div class="canvas">
          ${this.topology()}
          <div class="hs"><div class="ab">${tri(LEFT)}</div><div class="thumb fill"></div><div class="ab">${tri(RIGHT)}</div></div>
        </div>
        <div class="split wide"><i class="grip"></i></div>
        <div class="right">
          ${this.dockTitle("Topology Summary")}
          <div class="table">
            <div class="rows"><div class="head"><span>Node</span><span>Console</span></div>${nodeRows.map((n) => row(n, "telnet 192.168..."))}</div>
            <div class="vs"><div class="ab">${tri(UP)}</div><div class="thumb"></div><div class="fill"></div><div class="ab">${tri(DOWN)}</div></div>
            <div class="hs"><div class="ab">${tri(LEFT)}</div><div class="thumb" style="width:132px"></div><div class="fill"></div><div class="ab">${tri(RIGHT)}</div></div>
          </div>
          <div class="mid"><i class="hgrip"></i></div>
          ${this.dockTitle("Servers Summary")}
          <div class="servers">${row("DESKTOP-TLMR0M1 CPU 5...", "", false)}${row("GNS3 VM (GNS3 VM) CPU ...", "")}</div>
        </div>
      </div>
      <div class="status"><span>X: 12.0 Y: -25.0 Z: 2.0</span><span class="warn">${icon("wi", "0 0 13 12", svg`<path d="M6.500 1L12.200 11H.8Z" fill="#fff" stroke="#cf3a3a" stroke-width="1.500"/><path d="M6.500 4V7.500M6.500 8.500V9.700" stroke="#444" stroke-width="1.300"/>`)}2 warnings</span></div>
      ${this.taskbar()}`;
  }
}
